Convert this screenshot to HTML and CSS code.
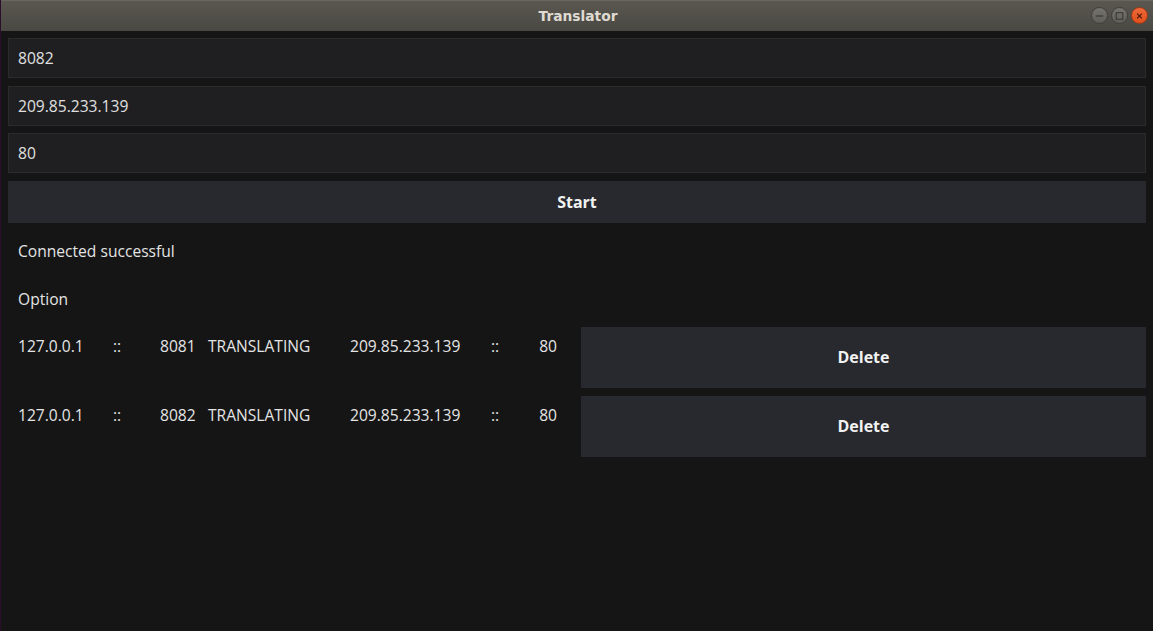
FILE: index.html
```html
<!DOCTYPE html>
<html>
<head>
<meta charset="utf-8">
<title>Translator</title>
<link rel="stylesheet" href="styles.css">
</head>
<body>
<div class="window">
  <div class="titlebar">
    <div class="title">Translator</div>
    <div class="controls">
      <span class="wbtn grey"><svg width="16" height="16" viewBox="0 0 16 16"><line x1="4" y1="8" x2="12" y2="8" stroke="#3a3935" stroke-width="1.3"/></svg></span>
      <span class="wbtn grey"><svg width="16" height="16" viewBox="0 0 16 16"><rect x="4.5" y="4.5" width="7" height="7" fill="none" stroke="#3a3935" stroke-width="1.2"/></svg></span>
      <span class="wbtn close"><svg width="16" height="16" viewBox="0 0 16 16"><path d="M5.5 5.5L10.5 10.5M10.5 5.5L5.5 10.5" stroke="#4a1a08" stroke-width="1.3"/></svg></span>
    </div>
  </div>
  <div class="content">
    <div class="field">8082</div>
    <div class="field">209.85.233.139</div>
    <div class="field">80</div>
    <div class="button start">Start</div>
    <div class="label">Connected successful</div>
    <div class="label">Option</div>
    <div class="row">
      <div class="cells">
        <span class="c c1">127.0.0.1</span>
        <span class="c c2">::</span>
        <span class="c c3">8081</span>
        <span class="c c4">TRANSLATING</span>
        <span class="c c5">209.85.233.139</span>
        <span class="c c6">::</span>
        <span class="c c7">80</span>
      </div>
      <div class="button del">Delete</div>
    </div>
    <div class="row">
      <div class="cells">
        <span class="c c1">127.0.0.1</span>
        <span class="c c2">::</span>
        <span class="c c3">8082</span>
        <span class="c c4">TRANSLATING</span>
        <span class="c c5">209.85.233.139</span>
        <span class="c c6">::</span>
        <span class="c c7">80</span>
      </div>
      <div class="button del">Delete</div>
    </div>
  </div>
</div>
</body>
</html>
```
FILE: styles.css
```css
html, body {
  margin: 0;
  padding: 0;
  background: #151515;
}
body {
  font-family: "Open Sans", "Noto Sans", sans-serif;
  color: #e4e4e4;
}
.window {
  width: 1153px;
  height: 631px;
  background: #151515;
  display: flex;
  flex-direction: column;
  overflow: hidden;
  border-left: 1px solid #2a0f2a;
  box-sizing: border-box;
}
.titlebar {
  height: 31px;
  flex: none;
  background: linear-gradient(#5a5750, #4a4843);
  border-top: 1px solid #6a665d;
  box-sizing: border-box;
  display: flex;
  align-items: center;
  justify-content: center;
  position: relative;
}
.title {
  font-family: "DejaVu Sans", sans-serif;
  font-weight: bold;
  font-size: 13.8px;
  color: #dfdbd2;
  margin-left: 2px;
}
.controls {
  position: absolute;
  right: 5px;
  top: 6px;
  display: flex;
  gap: 3px;
}
.wbtn {
  width: 17px;
  height: 17px;
  border-radius: 50%;
  display: flex;
  align-items: center;
  justify-content: center;
  box-sizing: border-box;
}
.wbtn.grey {
  background: linear-gradient(#75736d, #605e59);
  border: 1px solid #403e3a;
}
.wbtn.close {
  background: linear-gradient(#f0683a, #e0501c);
  border: 1px solid #9a3a14;
}
.content {
  padding: 7px 7px 0 7px;
  display: flex;
  flex-direction: column;
}
.field {
  height: 40px;
  box-sizing: border-box;
  background: #1f1f21;
  border: 1px solid #2b2b2d;
  padding-left: 9px;
  display: flex;
  align-items: center;
  font-size: 15.6px;
  color: #e0e0e0;
  margin-bottom: 8px;
}
.field:nth-child(2) { margin-bottom: 7px; }
.button {
  background: #28292e;
  color: #f2f2f2;
  font-weight: bold;
  font-size: 16px;
  display: flex;
  align-items: center;
  justify-content: center;
}
.start {
  height: 42px;
}
.label {
  height: 40px;
  margin-top: 8px;
  padding-left: 10px;
  display: flex;
  align-items: center;
  font-size: 15.6px;
  padding-bottom: 1px;
  box-sizing: border-box;
}
.row {
  display: flex;
  align-items: flex-start;
  margin-top: 8px;
  height: 61px;
}
.cells {
  display: flex;
  height: 38px;
  align-items: center;
  padding-left: 10px;
  width: 573px;
  flex: none;
  box-sizing: border-box;
  font-size: 15.6px;
}
.c { display: block; white-space: nowrap; }
.c1 { width: 95px; }
.c2 { width: 47px; }
.c3 { width: 35px; text-align: right; margin-right: 13px; }
.c4 { width: 142px; }
.c5 { width: 141px; }
.c6 { width: 30px; }
.c7 { width: 36px; text-align: right; }
.del {
  flex: 1;
  height: 61px;
  padding-bottom: 2px;
  box-sizing: border-box;
}
```
